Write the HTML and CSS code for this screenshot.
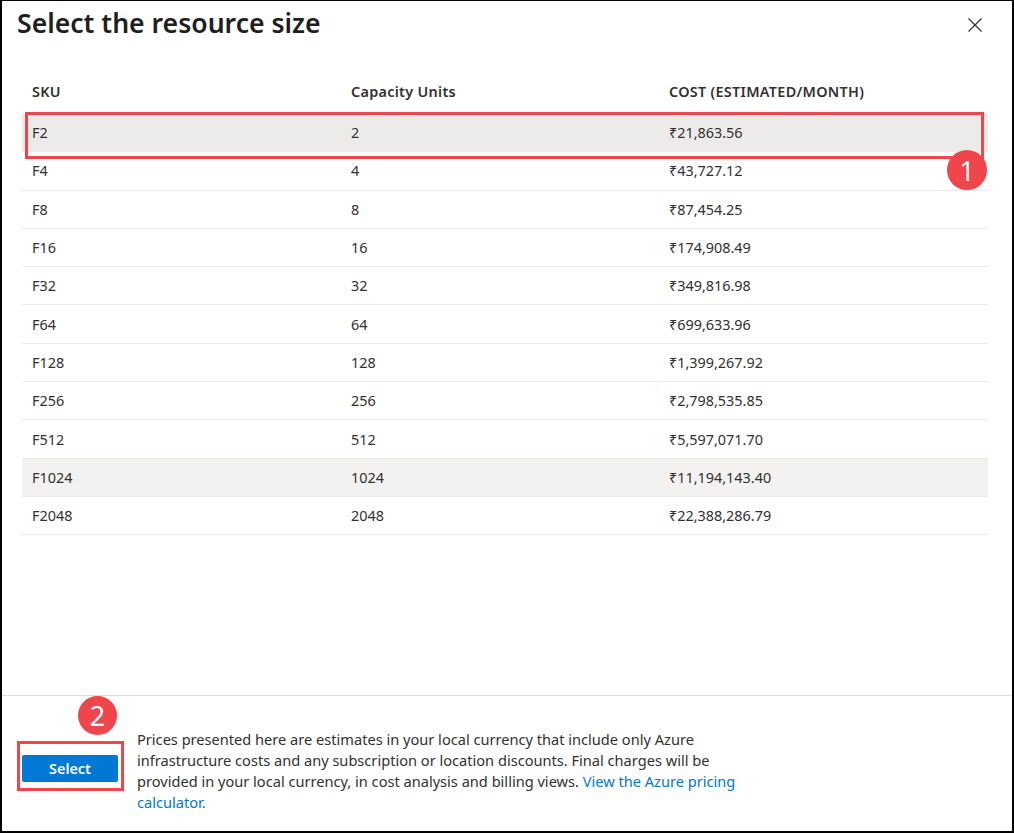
FILE: index.html
```html
<!DOCTYPE html>
<html lang="en">
<head>
<meta charset="utf-8">
<title>Select the resource size</title>
<link rel="stylesheet" href="styles.css">
</head>
<body>
<div class="dialog">
  <header class="head">
    <h1 class="title">Select the resource size</h1>
    <button class="close" aria-label="Close">
      <svg width="16" height="16" viewBox="0 0 16 16"><path d="M1.5 1.5 L14.5 14.5 M14.5 1.5 L1.5 14.5" stroke="#323130" stroke-width="1.2" fill="none"/></svg>
    </button>
  </header>
  <main class="content">
    <div class="table">
      <div class="row hdr"><div class="cell">SKU</div><div class="cell">Capacity Units</div><div class="cell">COST (ESTIMATED/MONTH)</div></div>
      <div class="row selected"><div class="cell">F2</div><div class="cell">2</div><div class="cell">₹21,863.56</div></div>
      <div class="row"><div class="cell">F4</div><div class="cell">4</div><div class="cell">₹43,727.12</div></div>
      <div class="row"><div class="cell">F8</div><div class="cell">8</div><div class="cell">₹87,454.25</div></div>
      <div class="row"><div class="cell">F16</div><div class="cell">16</div><div class="cell">₹174,908.49</div></div>
      <div class="row"><div class="cell">F32</div><div class="cell">32</div><div class="cell">₹349,816.98</div></div>
      <div class="row"><div class="cell">F64</div><div class="cell">64</div><div class="cell">₹699,633.96</div></div>
      <div class="row"><div class="cell">F128</div><div class="cell">128</div><div class="cell">₹1,399,267.92</div></div>
      <div class="row"><div class="cell">F256</div><div class="cell">256</div><div class="cell">₹2,798,535.85</div></div>
      <div class="row"><div class="cell">F512</div><div class="cell">512</div><div class="cell">₹5,597,071.70</div></div>
      <div class="row hover"><div class="cell">F1024</div><div class="cell">1024</div><div class="cell">₹11,194,143.40</div></div>
      <div class="row"><div class="cell">F2048</div><div class="cell">2048</div><div class="cell">₹22,388,286.79</div></div>
    </div>
  </main>
  <footer class="foot">
    <button class="primary">Select</button>
    <p class="note">Prices presented here are estimates in your local currency that include only Azure<br>infrastructure costs and any subscription or location discounts. Final charges will be<br>provided in your local currency, in cost analysis and billing views. <a href="#">View the Azure pricing<br>calculator.</a></p>
  </footer>
  <div class="mark mark-row"></div>
  <div class="mark mark-btn"></div>
  <div class="badge badge-1">1</div>
  <div class="badge badge-2">2</div>
</div>
</body>
</html>
```
FILE: styles.css
```css
* { box-sizing: border-box; }
html, body { margin: 0; padding: 0; background: #fff; }
body { font-family: "Noto Sans", "Open Sans", sans-serif; color: #323130; }

.dialog {
  position: relative;
  width: 1014px;
  height: 833px;
  border: 2px solid #000;
  border-top-width: 1px;
  display: flex;
  flex-direction: column;
  background: #fff;
}

.head {
  display: flex;
  justify-content: space-between;
  align-items: flex-start;
  padding: 2px 29px 0 15px;
  height: 72px;
}
.title {
  margin: 0;
  font-size: 26.6px;
  font-weight: 600;
  line-height: 40px;
  color: #201f1e;
}
.close {
  border: 0;
  background: none;
  padding: 0;
  margin-top: 14px;
  width: 16px;
  height: 16px;
  display: flex;
}

.content {
  flex: 1;
  padding: 0 24px 0 20px;
}
.table { display: flex; flex-direction: column; }
.row {
  display: grid;
  grid-template-columns: 319px 318px 1fr;
  height: 38.3px;
  align-items: center;
  border-bottom: 1px solid #edebe9;
  font-size: 14.4px;
}
.row.hdr {
  height: 41px;
  border-bottom: 0;
  font-weight: 600;
  padding-bottom: 4px;
  letter-spacing: 0.3px;
}
.row.selected { background: #edebe9; }
.row.hover { background: #f3f2f1; }
.cell { padding-left: 10px; white-space: nowrap; }

.foot {
  border-top: 1px solid #e1dfdd;
  height: 136px;
  display: flex;
  align-items: center;
  padding: 14px 0 0 20px;
  gap: 19px;
}
.primary {
  width: 96px;
  height: 27px;
  margin-top: -4px;
  background: #0078d4;
  color: #fff;
  border: 0;
  border-radius: 2px;
  font-family: inherit;
  font-size: 14.4px;
  font-weight: 600;
  flex: none;
}
.note {
  margin: 0;
  font-size: 14.6px;
  line-height: 21px;
}
.note a { color: #0078d4; text-decoration: none; }

.mark {
  position: absolute;
  border: 3px solid #f0454a;
}
.mark-row { left: 23px; top: 111px; width: 959px; height: 47px; }
.mark-btn { left: 15px; top: 740px; width: 107px; height: 50px; }

.badge {
  position: absolute;
  width: 40px;
  height: 40px;
  border-radius: 50%;
  background: #f0454a;
  color: #fff;
  font-size: 27px;
  display: flex;
  align-items: center;
  justify-content: center;
  line-height: 1;
}
.badge-1 { left: 945px; top: 149px; }
.badge-2 { left: 76px; top: 695px; width: 39px; height: 39px; }
```
